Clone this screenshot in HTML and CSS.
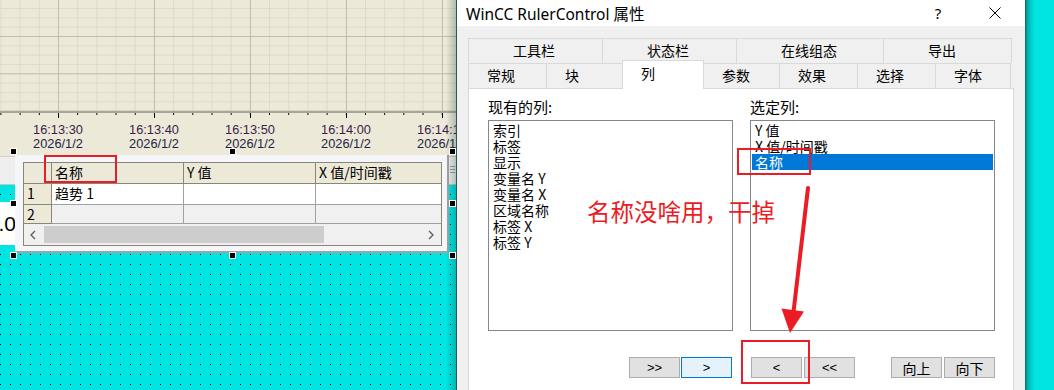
FILE: index.html
```html
<!DOCTYPE html>
<html lang="zh-CN">
<head>
    <meta charset="UTF-8">
    <title>WinCC RulerControl 属性</title>

    <link rel="stylesheet" href="styles.css">
</head>
<body>
<div class="screen">
    <!-- слева: рабочая область WinCC с трендом и таблицей -->
    <section class="canvas">
        <div class="trend">
            <div class="plot"></div>
            <div class="ticks"></div>
            <div class="axis-labels">
                <div class="stamp"><div class="time">16:13:30</div><div class="date">2026/1/2</div></div>
                <div class="stamp"><div class="time">16:13:40</div><div class="date">2026/1/2</div></div>
                <div class="stamp"><div class="time">16:13:50</div><div class="date">2026/1/2</div></div>
                <div class="stamp"><div class="time">16:14:00</div><div class="date">2026/1/2</div></div>
                <div class="stamp"><div class="time">16:14:10</div><div class="date">2026/1/2</div></div>
            </div>
        </div>
        <div class="strip"><span class="grip"></span></div>
        <div class="dots">
            <div class="value-box"><span>100.0</span></div>
        </div>

        <div class="ruler-popup">
            <div class="ruler-grid">
                <div class="cell rownum"></div>
                <div class="cell head">名称</div>
                <div class="cell head">Y 值</div>
                <div class="cell head last">X 值/时间戳</div>

                <div class="cell rownum">1</div>
                <div class="cell">趋势 1</div>
                <div class="cell"></div>
                <div class="cell last"></div>

                <div class="cell rownum">2</div>
                <div class="cell new"></div>
                <div class="cell new"></div>
                <div class="cell new last"></div>

                <div class="hscroll">
                    <svg class="arrow" width="6" height="10" viewBox="0 0 6 10"><polyline points="5,1 1,5 5,9" fill="none" stroke="#606060" stroke-width="1.4"/></svg>
                    <div class="thumb"></div>
                    <svg class="arrow right" width="6" height="10" viewBox="0 0 6 10"><polyline points="1,1 5,5 1,9" fill="none" stroke="#606060" stroke-width="1.4"/></svg>
                </div>
            </div>
        </div>

        <span class="handle h-tl"></span>
        <span class="handle h-tm"></span>
        <span class="handle h-tr"></span>
        <span class="handle h-ml"></span>
        <span class="handle h-mr"></span>
        <span class="handle h-bl"></span>
        <span class="handle h-bm"></span>
        <span class="handle h-br"></span>
    </section>

    <!-- диалог свойств -->
    <section class="dialog">
        <header class="titlebar">
            <span class="title">WinCC RulerControl 属性</span>
            <span class="title-btn help">?</span>
            <span class="title-btn close">
                <svg width="12" height="12" viewBox="0 0 12 12"><path d="M0.5 0.5L11.5 11.5M11.5 0.5L0.5 11.5" stroke="#000" stroke-width="1"/></svg>
            </span>
        </header>
        <div class="dialog-body">
            <div class="tab-row back">
                <div class="tab" style="width:134px">工具栏</div>
                <div class="tab" style="width:134px">状态栏</div>
                <div class="tab" style="width:147px">在线组态</div>
                <div class="tab last" style="width:129px">导出</div>
            </div>
            <div class="tab-row front">
                <div class="tab" style="width:78px">常规</div>
                <div class="tab" style="width:76px">块</div>
                <div class="tab active" style="width:82px">列</div>
                <div class="tab" style="width:76px">参数</div>
                <div class="tab" style="width:78px">效果</div>
                <div class="tab" style="width:78px">选择</div>
                <div class="tab last" style="width:76px">字体</div>
            </div>
            <div class="tab-page">
                <div class="columns">
                    <div>
                        <div class="caption">现有的列:</div>
                        <ul class="listbox">
                            <li>索引</li>
                            <li>标签</li>
                            <li>显示</li>
                            <li>变量名 Y</li>
                            <li>变量名 X</li>
                            <li>区域名称</li>
                            <li>标签 X</li>
                            <li>标签 Y</li>
                        </ul>
                    </div>
                    <div>
                        <div class="caption">选定列:</div>
                        <ul class="listbox">
                            <li>Y 值</li>
                            <li>X 值/时间戳</li>
                            <li class="selected">名称</li>
                        </ul>
                    </div>
                </div>
                <div class="buttons">
                    <div class="btn-group">
                        <button class="btn">&gt;&gt;</button>
                        <button class="btn default">&gt;</button>
                    </div>
                    <div class="btn-group right">
                        <button class="btn">&lt;</button>
                        <button class="btn">&lt;&lt;</button>
                        <button class="btn cjk up">向上</button>
                        <button class="btn cjk">向下</button>
                    </div>
                </div>
            </div>
        </div>
    </section>

    <div class="edge"></div>

    <!-- пометки поверх скриншота -->
    <div class="mark mark-head"></div>
    <div class="mark mark-item"></div>
    <div class="mark mark-button"></div>
    <div class="note">名称没啥用，干掉</div>
    <svg class="pointer" width="1054" height="390" viewBox="0 0 1054 390">
        <line x1="808" y1="188" x2="793.5" y2="312" stroke="#ec1c24" stroke-width="4" stroke-linecap="round"/>
        <polygon points="781.5,308.5 804,311.5 790,333" fill="#ec1c24"/>
    </svg>
</div>
</body>
</html>
```

FILE: styles.css
```css
* {
    box-sizing: border-box;
}

body {
    margin: 0;
    font-family: "Noto Sans CJK SC", sans-serif;
    color: #000;
}

.screen {
    position: relative;
    display: flex;
    width: 1054px;
    height: 390px;
    overflow: hidden;
    background: #00e5e2;
}

/*Рабочая область*/

.canvas {
    position: relative;
    width: 457px;
    display: flex;
    flex-direction: column;
    overflow: hidden;
}

.canvas::after {
    content: "";
    position: absolute;
    top: 0;
    right: 0;
    bottom: 0;
    width: 10px;
    background: linear-gradient(to right, rgba(0, 50, 50, 0), rgba(0, 50, 50, 0.25));
    border-right: 1px solid #2b5656;
}

.trend {
    height: 156px;
    background: #ece9d8;
}

.plot {
    height: 113px;
    border-bottom: 2px solid #a9a698;
    background-image:
        linear-gradient(to right, #c2beae 1px, transparent 1px),
        linear-gradient(to bottom, #c2beae 1px, transparent 1px),
        linear-gradient(to right, #dedac9 1px, transparent 1px),
        linear-gradient(to bottom, #dedac9 1px, transparent 1px);
    background-size: 96px 100%, 100% 37.3px, 19.2px 100%, 100% 9.33px;
    background-position: 58px 0, 0 36px, 58px 0, 0 36px;
}

.ticks {
    height: 5px;
    background-image:
        linear-gradient(to right, #000 1px, transparent 1px),
        linear-gradient(to right, #000 1px, transparent 1px);
    background-size: 96px 5px, 19.2px 2px;
    background-position: 58px 0, 58px 0;
    background-repeat: repeat-x;
}

.axis-labels {
    display: flex;
    padding-left: 10px;
    margin-top: 5px;
    font: 12.8px/14px "Liberation Sans", sans-serif;
}

.stamp {
    flex: 0 0 96px;
    text-align: center;
}

.time {
    color: #3d1b4f;
}

.date {
    color: #1f1f48;
}

.strip {
    position: relative;
    height: 29px;
    background: #efefef;
    border-top: 1px solid #d2d0c8;
    border-bottom: 1px solid #c4c4c4;
}

.grip {
    position: absolute;
    right: 2px;
    top: 9px;
    width: 5px;
    height: 9px;
    background: repeating-linear-gradient(to bottom, #9a9a9a 0 1px, transparent 1px 3px);
}

.dots {
    flex: 1;
    padding-top: 17px;
    background-color: #00e5e2;
    background-image:
        linear-gradient(to bottom, #00e5e2 9px, transparent 9px),
        linear-gradient(to right, #000 1px, transparent 1px);
    background-size: 10px 10px;
}

.value-box {
    width: 16px;
    height: 43px;
    display: flex;
    justify-content: flex-end;
    align-items: center;
    overflow: hidden;
    background: #fff;
    font: 21px "Liberation Sans", sans-serif;
    white-space: nowrap;
}

/*Таблица линейки*/

.ruler-popup {
    position: absolute;
    left: 15px;
    top: 155px;
    width: 434px;
    height: 98px;
    padding: 7px 5px 5px 8px;
    background: #f5f6fa;
    border-right: 2px solid #a3a3a3;
    border-bottom: 2px solid #a3a3a3;
}

.ruler-grid {
    display: grid;
    grid-template-columns: 28px 132px 132px 1fr;
    grid-template-rows: 21px 21px 19px 21px;
    border: 1px solid #8b8778;
    font-size: 14px;
    line-height: 19px;
}

.cell {
    padding-left: 3px;
    background: #fff;
    border-right: 1px solid #a0a0a0;
    border-bottom: 1px solid #a0a0a0;
    white-space: nowrap;
    overflow: hidden;
}

.cell.head,
.cell.rownum {
    background: #ece9d8;
    border-color: #8b8778;
}

.cell.new {
    background: #f0f0f0;
}

.cell.last {
    border-right: none;
}

.hscroll {
    grid-column: 1 / -1;
    display: flex;
    align-items: center;
    background: #f0f0f0;
    padding-left: 6px;
}

.thumb {
    width: 280px;
    height: 17px;
    margin-left: 8px;
    background: #cdcdcd;
}

.arrow.right {
    margin-left: auto;
    margin-right: 7px;
}

.handle {
    position: absolute;
    z-index: 2;
    width: 5px;
    height: 5px;
    background: #000;
    box-shadow: 0 0 0 1px #fff;
}

.h-tl, .h-ml, .h-bl { left: 11px; }
.h-tm, .h-bm { left: 230px; }
.h-tr, .h-mr, .h-br { left: 450px; }
.h-tl, .h-tm, .h-tr { top: 149px; }
.h-ml, .h-mr { top: 201px; }
.h-bl, .h-bm, .h-br { top: 253px; }

/*Диалог*/

.dialog {
    width: 568px;
    display: flex;
    flex-direction: column;
    background: #f0f0f0;
}

.titlebar {
    height: 26px;
    display: flex;
    align-items: center;
    padding-left: 9px;
    background: #fff;
    font: 15.5px "Noto Sans", "Noto Sans CJK SC", sans-serif;
}

.title-btn {
    width: 46px;
    height: 26px;
    display: flex;
    align-items: center;
    justify-content: center;
    font-size: 15px;
}

.help {
    margin-left: auto;
}

.close {
    margin-left: 11px;
    margin-right: 7px;
}

.dialog-body {
    flex: 1;
    display: flex;
    flex-direction: column;
    padding: 12px 11px 0 11px;
}

.tab-row {
    display: flex;
    align-items: flex-start;
    height: 25px;
    font-size: 14px;
    line-height: 23px;
}

.tab {
    height: 25px;
    border-top: 1px solid #d9d9d9;
    border-left: 1px solid #d9d9d9;
    white-space: nowrap;
}

.tab.last {
    border-right: 1px solid #d9d9d9;
}

.back .tab {
    padding-left: 44px;
}

.front .tab {
    padding-left: 18px;
}

.tab.active {
    position: relative;
    z-index: 1;
    height: 29px;
    margin-top: -3px;
    margin-right: -1px;
    padding-top: 1px;
    background: #fff;
    border-right: 1px solid #d9d9d9;
}

.tab-page {
    flex: 1;
    padding: 8px 0 0 19px;
    background: #fff;
    border: 1px solid #d9d9d9;
    border-bottom: none;
}

.columns,
.buttons {
    display: grid;
    grid-template-columns: 245px 245px;
    column-gap: 17px;
}

.caption {
    font-size: 15px;
    line-height: 20px;
    margin-bottom: 3px;
}

.listbox {
    height: 211px;
    margin: 0;
    padding: 1px;
    list-style: none;
    border: 1px solid #828790;
    font-size: 14px;
    line-height: 16px;
}

.listbox li {
    height: 16px;
    padding-left: 3px;
    white-space: nowrap;
}

.listbox .selected {
    background: #0078d7;
    color: #fff;
}

.buttons {
    margin-top: 26px;
}

.btn-group {
    display: flex;
    justify-content: flex-end;
    gap: 1px;
    padding-right: 1px;
}

.btn-group.right {
    justify-content: flex-start;
    gap: 2px;
    padding: 0 0 0 1px;
}

.btn {
    width: 51px;
    height: 21px;
    padding: 0;
    display: flex;
    align-items: center;
    justify-content: center;
    background: #e1e1e1;
    border: 1px solid #adadad;
    font: 13px "Liberation Sans", sans-serif;
    color: #000;
}

.btn.default {
    background: #e5f1fb;
    border-color: #0078d7;
}

.btn.cjk {
    font: 14px "Noto Sans CJK SC", sans-serif;
}

.btn.up {
    margin-left: auto;
}

.edge {
    width: 29px;
    background: linear-gradient(to right, #0d5f5f 0, #07a6a6 2px, #00cfcf 6px, #00e5e2 11px);
}

/*Пометки*/

.mark {
    position: absolute;
    border: 2px solid #ec1c24;
}

.mark-head {
    left: 44px;
    top: 155px;
    width: 73px;
    height: 28px;
}

.mark-item {
    left: 737px;
    top: 148px;
    width: 74px;
    height: 27px;
}

.mark-button {
    left: 741px;
    top: 340px;
    width: 69px;
    height: 44px;
}

.note {
    position: absolute;
    left: 587px;
    top: 199px;
    font-size: 23.5px;
    line-height: 24px;
    color: #ec1c24;
    white-space: nowrap;
}

.pointer {
    position: absolute;
    left: 0;
    top: 0;
}
```
